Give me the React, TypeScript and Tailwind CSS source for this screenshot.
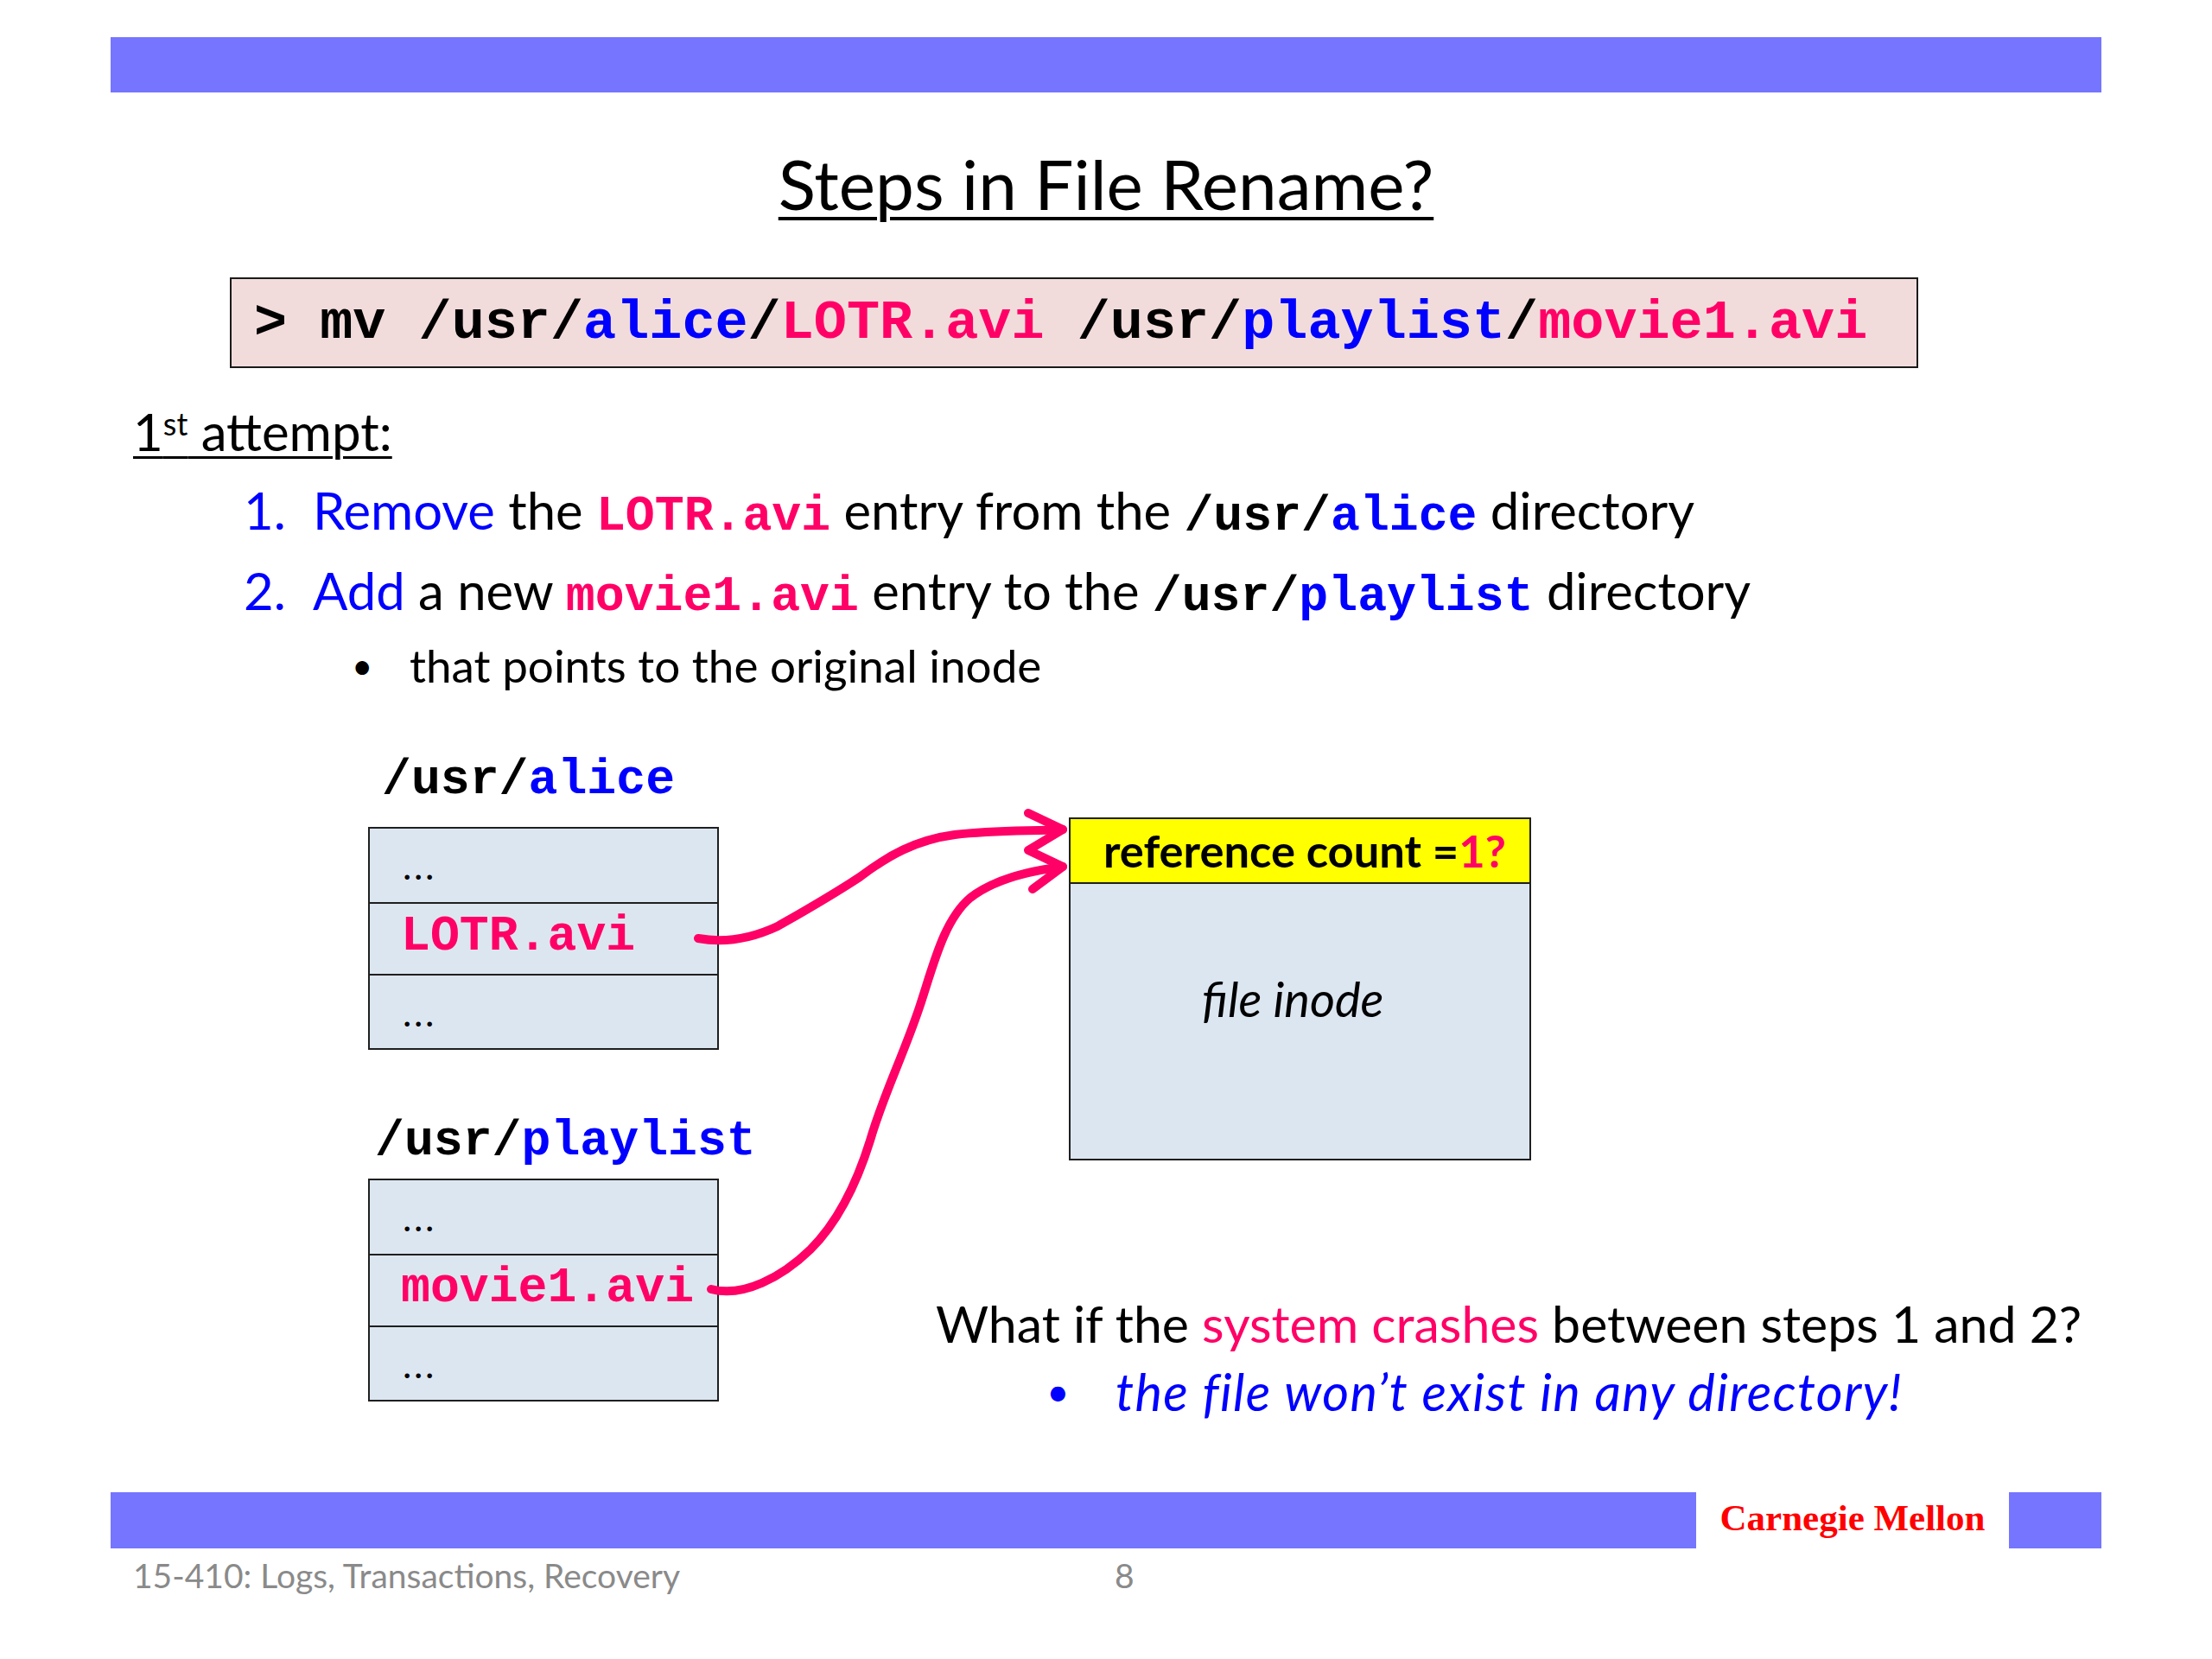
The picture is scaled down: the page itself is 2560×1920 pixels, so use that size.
const sans = "font-['Lato','Noto_Sans',sans-serif]";
const mono = "font-['Liberation_Mono',monospace] font-bold";

function Blue({ children }: { children: React.ReactNode }) {
  return <span className="text-[#0000ff]">{children}</span>;
}
function Pink({ children }: { children: React.ReactNode }) {
  return <span className="text-[#ff0066]">{children}</span>;
}
function Code({ children }: { children: React.ReactNode }) {
  return <span className={`${mono} text-[56.5px]`}>{children}</span>;
}

function DirTable({ name }: { name: string }) {
  const rowClass = "h-[85px] flex items-center pl-[38px] border-[#1f1f1f]";
  return (
    <div className="border-2 border-[#1f1f1f] bg-[#dce6f1] w-[406px] h-[258px] flex flex-col">
      <div className={`${rowClass} text-[44px] tracking-[0.06em]`}>...</div>
      <div className={`${rowClass} border-y-2 pb-[3px]`}>
        <span className={`${mono} text-[56.5px] text-[#ff0066] -ml-[2px]`}>{name}</span>
      </div>
      <div className={`${rowClass} text-[44px] tracking-[0.06em]`}>...</div>
    </div>
  );
}

export default function App() {
  return (
    <div className={`${sans} relative w-[2560px] h-[1920px] bg-white text-black overflow-hidden flex flex-col`}>
      <div className="mt-[43px] mx-[128px] h-[64px] bg-[#7575ff] shrink-0" />

      <h1 className="mt-[59px] text-center text-[80px] leading-[92px] underline decoration-[4px] underline-offset-[8px]">
        Steps in File Rename?
      </h1>

      <div className={`mt-[63px] ml-[266px] w-[1954px] h-[105px] border-2 border-[#1a1a1a] bg-[#f2dcdb] flex items-center pl-[26px] pt-[2px] shrink-0 ${mono} text-[63.5px] whitespace-pre`}>
        {'> mv /usr/'}<Blue>alice</Blue>/<Pink>LOTR.avi</Pink>{' /usr/'}<Blue>playlist</Blue>/<Pink>movie1.avi</Pink>
      </div>

      <div className="mt-[38px] ml-[154px] text-[60px] leading-[70px]">
        <span className="underline decoration-[3px] underline-offset-[6px]">1<sup className="text-[36px] leading-none">st</sup> attempt:</span>
      </div>

      <div className="mt-[21px] ml-[282px] text-[59.8px] leading-[70px] flex flex-col gap-[15px]">
        <div className="flex">
          <span className="w-[80px] text-[#0000ff]">1.</span>
          <span className="whitespace-pre"><Blue>Remove</Blue> the <Code><Pink>LOTR.avi</Pink></Code> entry from the <Code>/usr/<Blue>alice</Blue></Code> directory</span>
        </div>
        <div className="flex">
          <span className="w-[80px] text-[#0000ff]">2.</span>
          <span className="whitespace-pre"><Blue>Add</Blue> a new <Code><Pink>movie1.avi</Pink></Code> entry to the <Code>/usr/<Blue>playlist</Blue></Code> directory</span>
        </div>
      </div>

      <div className="mt-[12px] ml-[410px] flex text-[53px] leading-[64px]">
        <span className="w-[64px] -ml-[3px] mr-[3px] text-[42px]">•</span>
        <span>that points to the original inode</span>
      </div>

      <div className="mt-[69px] ml-[426px] flex">
        <div className="w-[406px] shrink-0 flex flex-col">
          <div className={`${mono} text-[56.5px] leading-[64px] pl-[16px] mb-[22px]`}>/usr/<Blue>alice</Blue></div>
          <DirTable name="LOTR.avi" />
          <div className={`${mono} text-[56.5px] leading-[64px] pl-[8px] mt-[74px] mb-[11px] whitespace-pre`}>/usr/<Blue>playlist</Blue></div>
          <DirTable name="movie1.avi" />
        </div>

        <div className="ml-[251px] flex flex-col">
          <div className="ml-[154px] mt-[75px] w-[535px] h-[397px] border-2 border-[#1f1f1f] bg-[#dce6f1] flex flex-col">
            <div className="h-[75px] bg-[#ffff00] border-b-2 border-[#1f1f1f] flex items-center pl-[38px] text-[52.5px] font-bold whitespace-pre">
              reference count =<Pink>1?</Pink>
            </div>
            <div className="pt-[101px] pl-[152px] italic text-[56px] leading-[64px]">file inode</div>
          </div>
          <div className="mt-[153px] text-[59px] leading-[72px] whitespace-pre">
            What if the <Pink>system crashes</Pink> between steps 1 and 2?
          </div>
          <div className="mt-[6px] ml-[128px] flex text-[#0000ff] text-[59.5px] leading-[72px] tracking-[0.023em] italic">
            <span className="w-[80px] not-italic text-[46px]">•</span>
            <span>the file won’t exist in any directory!</span>
          </div>
        </div>
      </div>

      <div className="absolute left-[128px] right-[128px] top-[1727px] flex h-[65px]">
        <div className="w-[1835px] bg-[#7575ff]" />
        <div className="w-[362px] flex items-center justify-center font-['Liberation_Serif',serif] font-bold text-[43px] text-[#ff0000] pb-[4px]">Carnegie Mellon</div>
        <div className="flex-1 bg-[#7575ff]" />
      </div>

      <div className="absolute left-[154px] top-[1799px] flex text-[39px] leading-[48px] text-[#8a8a8a]">
        <span className="w-[1136px]">15-410: Logs, Transactions, Recovery</span>
        <span>8</span>
      </div>

      <svg className="absolute left-0 top-0 w-[2560px] h-[1920px] pointer-events-none" viewBox="0 0 2560 1920" fill="none" stroke="#ff0066" strokeWidth="10" strokeLinecap="round" strokeLinejoin="round">
        <path d="M808 1086 C 840 1092 870 1086 900 1072 C 935 1052 960 1038 995 1015 C 1028 990 1060 972 1105 966 C 1150 961 1190 962 1230 960" />
        <path d="M1190 941 L1230 960 L1190 984 L1230 1003 L1195 1029" />
        <path d="M823 1492 C 860 1502 905 1478 938 1446 C 972 1412 993 1365 1007 1320 C 1022 1268 1044 1225 1064 1166 C 1080 1118 1092 1065 1123 1039 C 1150 1018 1190 1008 1230 1003" />
      </svg>
    </div>
  );
}
